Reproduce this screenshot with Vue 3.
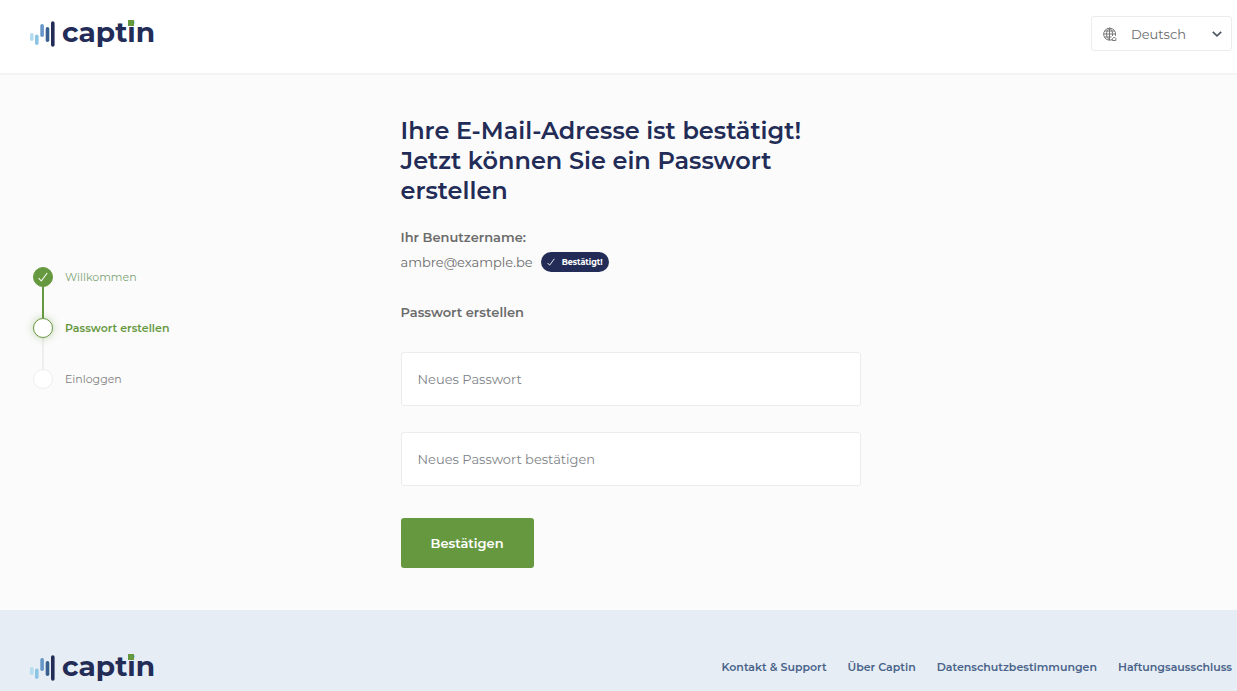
<script setup>
import { ref } from 'vue'

const language = ref('Deutsch')
const password = ref('')
const confirmation = ref('')

const steps = [
  { label: 'Willkommen', state: 'done' },
  { label: 'Passwort erstellen', state: 'active' },
  { label: 'Einloggen', state: 'pending' },
]

const links = ['Kontakt & Support', 'Über Captin', 'Datenschutzbestimmungen', 'Haftungsausschluss']

const bars = [
  { x: 0, y: 12, height: 8, color: '#b5dbf0' },
  { x: 5, y: 13.5, height: 10.5, color: '#8cc4e4' },
  { x: 10.3, y: 3, height: 13, color: '#6796c8' },
  { x: 15.7, y: 6, height: 15, color: '#39618f' },
  { x: 21, y: 0.3, height: 25.4, color: '#222c57' },
]
</script>

<template>
  <div class="page">
    <header class="header">
      <a class="logo" href="#" aria-label="captin">
        <svg class="bars" width="25" height="26" viewBox="0 0 25 26" aria-hidden="true">
          <rect v-for="bar in bars" :key="bar.x" :x="bar.x" :y="bar.y" width="3.6" :height="bar.height" rx="1.8" :fill="bar.color" />
        </svg>
        <span class="wordmark">capt<span class="dotted">i</span>n</span>
      </a>
      <div class="language">
        <svg class="globe" width="14" height="15" viewBox="0 0 14 15" fill="none" stroke="#777" aria-hidden="true">
          <path d="M9 12.7A6 6 0 1 1 12.5 8.5V7" />
          <path d="M6.5 1C2.5 4 2.5 10 6.5 13M6.5 1c2.500 1.700 3.500 4.500 3 8M6.500 1v12M.5 7h12M1.500 4h10M1.500 10h7" />
          <path d="M9.300 13.500v-1.500l2-2 1.500 1.500v2z" />
        </svg>
        <select v-model="language" aria-label="Sprache">
          <option>Deutsch</option>
          <option>English</option>
          <option>Français</option>
          <option>Nederlands</option>
        </select>
        <svg class="chevron" width="10" height="6" viewBox="0 0 10 6" fill="none" stroke="#4f5662" stroke-width="1.7" aria-hidden="true">
          <path d="M.8.8L5 4.8 9.2.8" />
        </svg>
      </div>
    </header>

    <main class="main">
      <ol class="steps">
        <li v-for="step in steps" :key="step.label" class="step" :class="step.state">
          <span class="marker">
            <svg v-if="step.state === 'done'" width="10" height="10" viewBox="0 0 10 10" fill="none" stroke="#fff" stroke-width="1.1" aria-hidden="true">
              <path d="M.7 6.2L3.3 9 9.2 1" />
            </svg>
          </span>
          <span>{{ step.label }}</span>
        </li>
      </ol>

      <form class="form" @submit.prevent>
        <h1>Ihre E-Mail-Adresse ist bestätigt! Jetzt können Sie ein Passwort erstellen</h1>
        <p class="caption">Ihr Benutzername:</p>
        <p class="user">
          <span>ambre@example.be</span>
          <span class="badge">
            <svg width="8" height="8" viewBox="0 0 10 10" fill="none" stroke="#fff" stroke-width="1.1" aria-hidden="true">
              <path d="M.7 6.2L3.3 9 9.2 1" />
            </svg>
            Bestätigt!
          </span>
        </p>
        <h2>Passwort erstellen</h2>
        <input v-model="password" type="password" placeholder="Neues Passwort" aria-label="Neues Passwort" autocomplete="new-password">
        <input v-model="confirmation" type="password" placeholder="Neues Passwort bestätigen" aria-label="Neues Passwort bestätigen" autocomplete="new-password">
        <button type="submit">Bestätigen</button>
      </form>
    </main>

    <footer class="footer">
      <a class="logo" href="#" aria-label="captin">
        <svg class="bars" width="25" height="26" viewBox="0 0 25 26" aria-hidden="true">
          <rect v-for="bar in bars" :key="bar.x" :x="bar.x" :y="bar.y" width="3.6" :height="bar.height" rx="1.8" :fill="bar.color" />
        </svg>
        <span class="wordmark">capt<span class="dotted">i</span>n</span>
      </a>
      <nav>
        <a v-for="link in links" :key="link" href="#">{{ link }}</a>
      </nav>
    </footer>
  </div>
</template>

<style>
body {
  margin: 0;
}
</style>

<style scoped>
.page {
  display: flex;
  flex-direction: column;
  min-height: 100vh;
  background: #fbfbfb;
  color: #6b6b6b;
  font: 400 13px/20px Montserrat, Inter, sans-serif;
}

.page * {
  box-sizing: border-box;
}

.header {
  display: flex;
  align-items: flex-start;
  justify-content: space-between;
  height: 75px;
  padding: 16px 5px 0 30px;
  border-bottom: 2px solid #f4f4f4;
  background: #fff;
}

.logo {
  display: flex;
  gap: 7px;
  padding-top: 5px;
  color: #222c57;
  text-decoration: none;
}

.wordmark {
  font-size: 28px;
  font-weight: 700;
  line-height: 22px;
}

.dotted {
  position: relative;
}

.dotted::after {
  content: "";
  position: absolute;
  top: 5px;
  left: 1px;
  width: 6px;
  height: 6px;
  background: #66993f;
}

.language {
  position: relative;
  width: 141px;
}

.language select {
  width: 100%;
  height: 35px;
  padding: 0 30px 0 39px;
  border: 1px solid #ececec;
  border-radius: 3px;
  background: #fff;
  color: #6b6b6b;
  font: inherit;
  appearance: none;
}

.globe,
.chevron {
  position: absolute;
  pointer-events: none;
}

.globe {
  top: 11px;
  left: 12px;
}

.chevron {
  top: 15px;
  right: 10px;
}

.main {
  display: grid;
  grid-template-columns: 1fr 460px 1fr;
  padding: 41px 5px 42px 33px;
}

.steps {
  margin: 0;
  padding: 151px 0 0;
  list-style: none;
  font-size: 11px;
}

.step {
  display: flex;
  position: relative;
  gap: 12px;
  height: 51px;
  color: #808080;
}

.marker {
  display: grid;
  place-items: center;
  z-index: 1;
  width: 20px;
  height: 20px;
  border: 1px solid #eee;
  border-radius: 50%;
  background: #fff;
}

.step:not(:last-child)::before {
  content: "";
  position: absolute;
  top: 20px;
  left: 9px;
  width: 2px;
  height: 31px;
  background: #eee;
}

.step.done::before {
  background: #66993f;
}

.done {
  color: #7ba477;
}

.active {
  color: #66993f;
  font-weight: 600;
}

.done .marker {
  border-color: #66993f;
  background: #66993f;
}

.active .marker {
  border-color: #66993f;
  box-shadow: 0 0 9px #66993f66;
}

.form {
  display: flex;
  flex-direction: column;
  align-items: flex-start;
  margin-left: -2px;
  margin-right: 2px;
}

h1 {
  margin: 0;
  color: #222c57;
  font-size: 24px;
  font-weight: 600;
  line-height: 30px;
}

.caption {
  margin: 21px 0 5px;
  font-weight: 600;
}

.user {
  display: flex;
  align-items: center;
  gap: 8px;
  margin: 0;
}

.badge {
  display: flex;
  align-items: center;
  justify-content: center;
  gap: 7px;
  width: 68px;
  height: 20px;
  border-radius: 10px;
  background: #222c57;
  color: #fff;
  font-size: 8px;
  font-weight: 700;
}

h2 {
  margin: 30px 0;
  font-size: 13px;
  font-weight: 600;
  line-height: 20px;
}

.form input {
  width: 100%;
  height: 54px;
  margin-bottom: 26px;
  padding: 0 16px;
  border: 1px solid #ececec;
  border-radius: 3px;
  background: #fff;
  color: #6b6b6b;
  font: inherit;
}

.form input::placeholder {
  color: #808488;
  opacity: 1;
}

.form button {
  height: 50px;
  margin-top: 6px;
  padding: 0 30px;
  border: 0;
  border-radius: 3px;
  background: #66993f;
  color: #fff;
  font: inherit;
  font-weight: 600;
}

.footer {
  display: flex;
  flex: 1;
  align-items: flex-start;
  justify-content: space-between;
  padding: 40px 5px 9px 30px;
  background: #e6edf4;
}

nav {
  display: flex;
  gap: 21px;
  padding-top: 7px;
}

nav a {
  color: #49638a;
  font-size: 11px;
  font-weight: 600;
  text-decoration: none;
}
</style>
